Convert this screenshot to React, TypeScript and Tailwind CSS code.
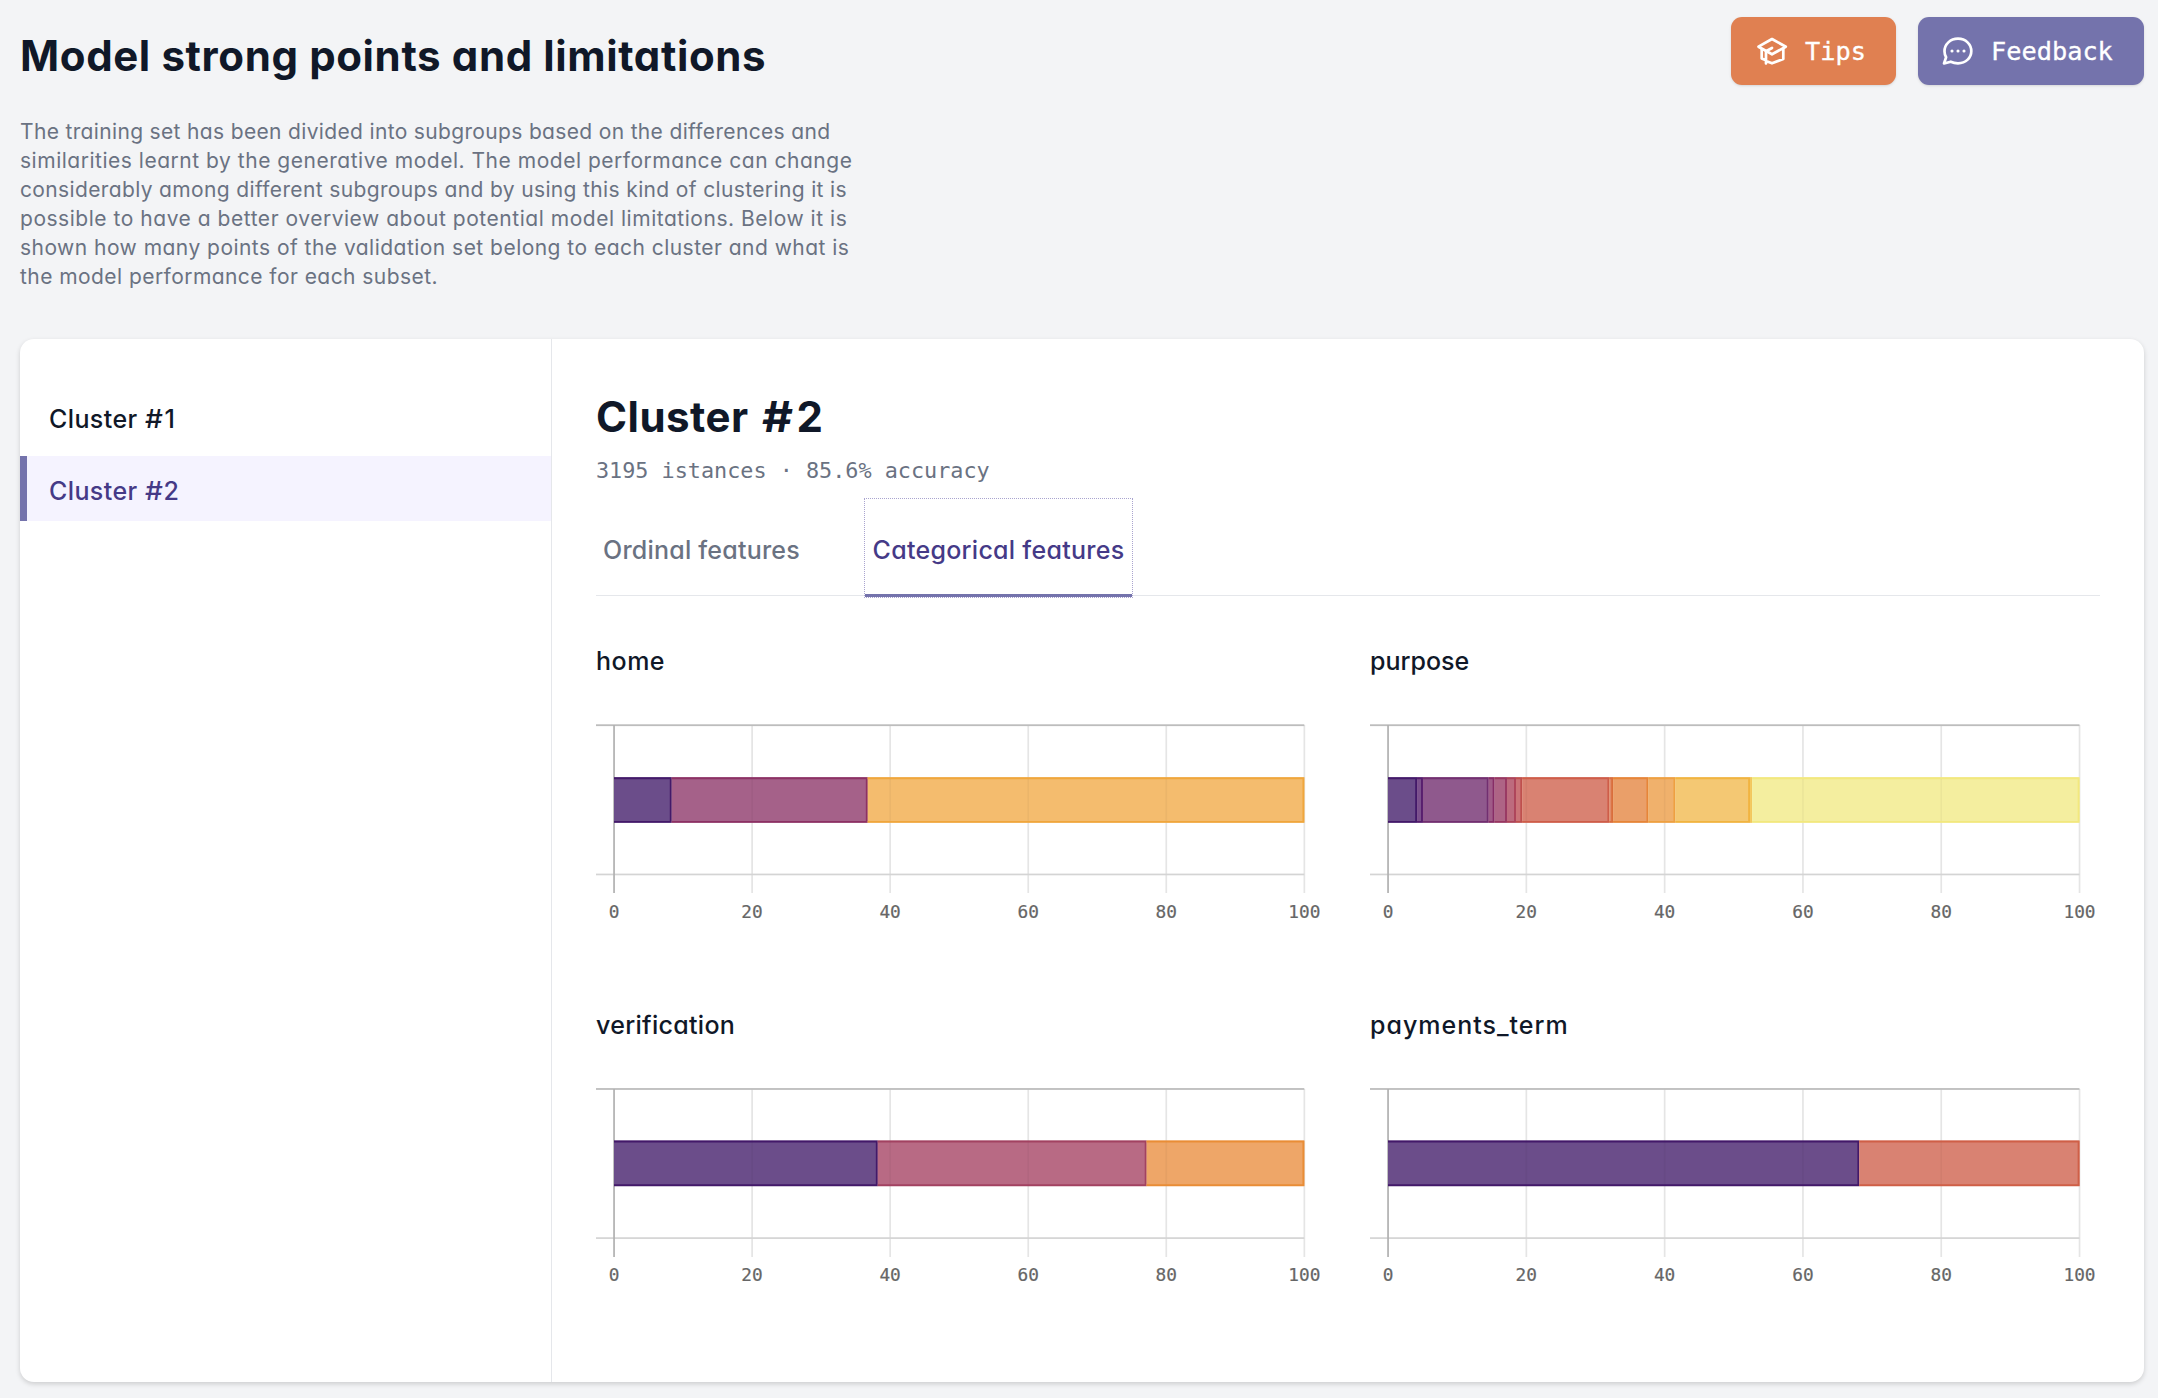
import React from "react";

type Segment = { end: number; color: string; edge: string };
type ChartData = { title: string; tracking: string; segments: Segment[] };

const charts: ChartData[] = [
  {
    title: "home",
    tracking: "tracking-[0.5px]",
    segments: [
      { end: 8.35, color: "#6b4d8a", edge: "#431969" },
      { end: 36.75, color: "#a56189", edge: "#8c3164" },
      { end: 100, color: "#f4bc6e", edge: "#f0a63c" },
    ],
  },
  {
    title: "purpose",
    tracking: "tracking-normal",
    segments: [
      { end: 4.2, color: "#6b4d8a", edge: "#431969" },
      { end: 5.05, color: "#7b508c", edge: "#561c6d" },
      { end: 14.55, color: "#8f598d", edge: "#722f70" },
      { end: 15.4, color: "#a05b88", edge: "#872d66" },
      { end: 17.2, color: "#ae6485", edge: "#983762" },
      { end: 18.5, color: "#bd6b7e", edge: "#ad4459" },
      { end: 19.4, color: "#cb7378", edge: "#bf504d" },
      { end: 32, color: "#d98272", edge: "#ce5d49" },
      { end: 32.55, color: "#e18c69", edge: "#da6e3c" },
      { end: 37.65, color: "#ea9f69", edge: "#e68538" },
      { end: 41.55, color: "#f0b16c", edge: "#eea041" },
      { end: 52.35, color: "#f4c873", edge: "#f1b440" },
      { end: 52.65, color: "#f3cf75", edge: "#f2c75d" },
      { end: 100, color: "#f4ee9f", edge: "#f2e87e" },
    ],
  },
  {
    title: "verification",
    tracking: "tracking-[0.3px]",
    segments: [
      { end: 38.2, color: "#6b4d8a", edge: "#431969" },
      { end: 77.15, color: "#b86a84", edge: "#a24261" },
      { end: 100, color: "#eea668", edge: "#e98d36" },
    ],
  },
  {
    title: "payments_term",
    tracking: "tracking-[1px]",
    segments: [
      { end: 68.15, color: "#6b4d8a", edge: "#431969" },
      { end: 100, color: "#d98272", edge: "#cf5f47" },
    ],
  },
];

const ticks = [0, 20, 40, 60, 80, 100];

function StackedBar({ segments, zero, full, dy }: { segments: Segment[]; zero: number; full: number; dy: number }) {
  const x = (value: number) => zero + ((full - zero) * value) / 100;
  return (
    <svg className="block h-[220px] w-[745px] overflow-visible" viewBox="0 0 745 220">
      {ticks.slice(1).map((t) => (
        <rect key={t} x={x(t) - 0.8} y="9" width="1.7" height="168" fill="#e5e5e5" />
      ))}
      <rect x="0" y={8.3 - dy * 0.3} width={full} height="1.8" fill="#bdbdbd" />
      <rect x="0" y={157.6 - dy * 0.5} width={full} height="1.7" fill="#d4d4d4" />
      <rect x={zero - 0.8} y="9" width="1.7" height="168" fill="#b1b1b1" />
      {segments.map((s, i) => {
        const start = i === 0 ? zero : x(segments[i - 1].end);
        const end = x(s.end);
        const top = 61.3 - dy;
        return (
          <g key={s.end}>
            <rect x={start} y={top} width={end - start} height="45.3" fill={s.color} />
            <path d={`M${start} ${top + 0.9}H${end - 0.9}V${top + 44.6}H${start}`} fill="none" stroke={s.edge} strokeWidth="1.9" />
          </g>
        );
      })}
      {[20, 40, 60, 80].map((t) => (
        <rect key={t} x={x(t) - 0.8} y={63 - dy} width="1.7" height="42" fill="#000" opacity="0.035" />
      ))}
      {ticks.map((t) => (
        <text
          key={t}
          x={x(t)}
          y={202 - dy}
          textAnchor="middle"
          fill="#666"
          stroke="#666"
          strokeWidth="0.2"
          fontSize="17.8"
          fontFamily="'DejaVu Sans Mono', monospace"
        >
          {t}
        </text>
      ))}
    </svg>
  );
}

function ChartCard({ chart, index }: { chart: ChartData; index: number }) {
  const right = index % 2 === 1;
  return (
    <section className="h-[364px]">
      <h3 className={`h-[73px] text-[25px] leading-[36px] font-medium text-gray-900 ${chart.tracking}`}>{chart.title}</h3>
      <StackedBar segments={chart.segments} zero={18} full={right ? 709.5 : 708.3} dy={index > 1 ? 0.7 : 0} />
    </section>
  );
}

function CapIcon() {
  return (
    <svg className="h-8 w-8" viewBox="0 0 32 32" fill="none" stroke="currentColor" strokeWidth="2.7" strokeLinecap="round" strokeLinejoin="round">
      <path d="M16 4 29.800 11.700 16 19.300 2.500 11.700Z" />
      <path d="M27.300 14v10L16 28.300l-4-1.600M5.700 14v9.500l3 1.200M16 13l-6 3.300V28.500" />
    </svg>
  );
}

function ChatIcon() {
  return (
    <svg className="h-8 w-8" viewBox="0 0 32 32" fill="none" stroke="currentColor" strokeWidth="2.7" strokeLinecap="round" strokeLinejoin="round">
      <path d="M17 28.300C25 28.300 30.300 22.500 30.300 16.200C30.300 9.300 24.800 3.700 17 3.700C9.300 3.700 3.500 9.300 3.500 16.200C3.500 18.500 4 20.400 5.100 22.300L3 28.500L9.700 26.700C12 27.800 14.400 28.300 17 28.300Z" />
      <path d="M11 16h.01M17 16h.01M23 16h.01" strokeWidth="3.100" />
    </svg>
  );
}

export default function App() {
  return (
    <div className="h-[1398px] w-[2158px] overflow-hidden bg-[#f3f4f6] px-5 pt-[17px] font-['Inter',sans-serif] [font-feature-settings:'cv11','ss03']">
      <header className="flex h-[322px] justify-between">
        <div>
          <h1 className="mt-[15px] h-[48px] text-[42px] leading-[48px] font-bold tracking-[0.62px] whitespace-nowrap text-gray-900">
            Model strong points and limitations
          </h1>
          <p className="mt-[37px] text-[21px] leading-[29px] whitespace-nowrap text-gray-500">
            <span className="block w-fit tracking-[0.34px]">The training set has been divided into subgroups based on the differences and</span>
            <span className="block w-fit tracking-[0.52px]">similarities learnt by the generative model. The model performance can change</span>
            <span className="block w-fit tracking-[0.36px]">considerably among different subgroups and by using this kind of clustering it is</span>
            <span className="block w-fit tracking-[0.53px]">possible to have a better overview about potential model limitations. Below it is</span>
            <span className="block w-fit tracking-[0.47px]">shown how many points of the validation set belong to each cluster and what is</span>
            <span className="block w-fit tracking-[0.44px]">the model performance for each subset.</span>
          </p>
        </div>
        <div className="-mr-[6px] flex h-[68px] gap-[22px] font-['DejaVu_Sans_Mono',monospace] text-[25.300px] text-white [-webkit-text-stroke:0.3px_white]">
          <button className="flex w-[165px] items-center rounded-[11px] bg-[#e08051] pl-[25px] shadow-sm">
            <CapIcon />
            <span className="ml-[17px] pt-[2px]">Tips</span>
          </button>
          <button className="flex w-[226px] items-center rounded-[11px] bg-[#7473ac] pl-[23px] shadow-sm">
            <ChatIcon />
            <span className="ml-[18px] pt-[2px]">Feedback</span>
          </button>
        </div>
      </header>

      <main className="flex h-[1043px] w-[2124px] overflow-hidden rounded-[14px] bg-white shadow-[0_2px_5px_rgba(0,0,0,0.16)]">
        <nav className="w-[532px] shrink-0 border-r border-gray-200 pt-[45px] text-[25px] font-medium">
          <div className="flex h-[72px] items-center pl-[29px] text-gray-900">
            <span className="tracking-[0.4px] whitespace-pre">Cluster </span>
            <span className="mr-[4px] origin-left scale-x-[1.12]">#</span>
            <span>1</span>
          </div>
          <div className="flex h-[65px] items-center border-l-[7px] border-[#7473ac] bg-[#f5f3ff] pt-[6px] pl-[22px] text-[#453a87]">
            <span className="tracking-[0.4px] whitespace-pre">Cluster </span>
            <span className="mr-[3px] origin-left scale-x-[1.12]">#</span>
            <span>2</span>
          </div>
        </nav>
        <div className="flex-1 pt-[52px] pl-[44px]">
          <h2 className="flex h-[52px] text-[42px] leading-[52px] font-bold text-gray-900">
            <span className="tracking-[0.5px] whitespace-pre [word-spacing:3px]">Cluster </span>
            <span className="mr-[7px] origin-left scale-x-[1.14]">#</span>
            <span>2</span>
          </h2>
          <p className="h-[55px] pt-[14px] font-['DejaVu_Sans_Mono',monospace] text-[21.800px] leading-[28px] text-gray-500">
            3195 istances · 85.6% accuracy
          </p>
          <div className="flex h-[98px] w-[1504px] border-b border-gray-200 text-[25px] font-medium">
            <div className="flex w-[268px] items-center pt-[8px] pl-[7px] tracking-[0.22px] text-gray-500">Ordinal features</div>
            <div className="relative flex h-[100px] w-[269px] items-center justify-center border border-dotted border-[#a9a4cf] tracking-[0.28px] text-[#453a87] after:absolute after:inset-x-0 after:bottom-0 after:h-[3px] after:bg-[#7473ac]">
              <span className="pt-[5px]">Categorical features</span>
            </div>
          </div>
          <div className="grid w-[1540px] grid-cols-[774px_766px] pt-[47px]">
            {charts.map((chart, i) => (
              <ChartCard key={chart.title} chart={chart} index={i} />
            ))}
          </div>
        </div>
      </main>
    </div>
  );
}
